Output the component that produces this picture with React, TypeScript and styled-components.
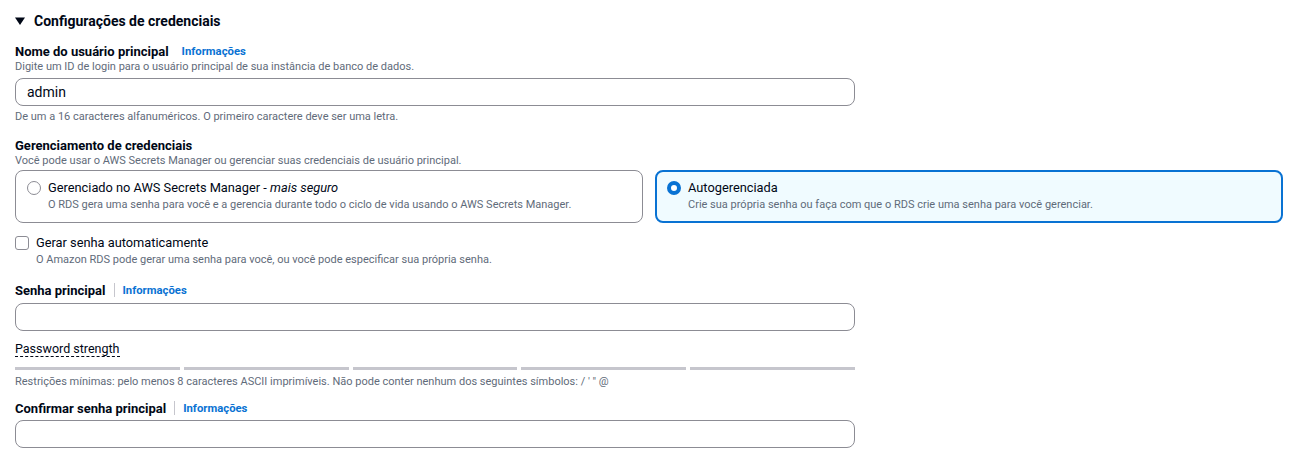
import React from "react";
import styled, { createGlobalStyle } from "styled-components";

const Global = createGlobalStyle`
  html, body { margin: 0; padding: 0; background: #ffffff; }
  body { font-family: Roboto, "Liberation Sans", Arial, sans-serif; color: #000716; }
  * { box-sizing: border-box; }
`;

const Page = styled.div`
  width: 1296px;
  height: 466px;
  overflow: hidden;
  padding: 12px 13px 0 15px;
  display: flex;
  flex-direction: column;
`;

const Header = styled.div`
  display: flex;
  align-items: center;
  gap: 9px;
  height: 18px;
  font-size: 14px;
  font-weight: 700;
`;

const Caret = styled.svg`
  width: 10px;
  height: 10px;
  fill: #000716;
`;

const Field = styled.div<{ $mt: number; $wide?: boolean }>`
  display: flex;
  flex-direction: column;
  margin-top: ${(p) => p.$mt}px;
  width: ${(p) => (p.$wide ? "1268px" : "840px")};
`;

const LabelRow = styled.div`
  display: flex;
  align-items: center;
  height: 16px;
`;

const Label = styled.span`
  font-size: 13px;
  font-weight: 700;
`;

const Divider = styled.span`
  width: 1px;
  height: 14px;
  background: #c6c6cd;
  margin: 0 8px;
`;

const Info = styled.a<{ $gap?: number }>`
  font-size: 11.3px;
  font-weight: 700;
  color: #0972d3;
  text-decoration: none;
  margin-left: ${(p) => p.$gap ?? 0}px;
`;

const Desc = styled.div<{ $mt?: number }>`
  font-size: 11px;
  color: #5f6b7a;
  line-height: 16px;
  margin-top: ${(p) => p.$mt ?? 0}px;
`;

const Input = styled.div<{ $mt: number }>`
  height: 28px;
  border: 1px solid #8c8c94;
  border-radius: 8px;
  padding: 0 11px;
  display: flex;
  align-items: center;
  font-size: 14px;
  margin-top: ${(p) => p.$mt}px;
`;

const Tiles = styled.div`
  display: grid;
  grid-template-columns: 1fr 1fr;
  gap: 12px;
  margin-top: 1px;
`;

const Tile = styled.div<{ $active?: boolean }>`
  height: 53px;
  border-radius: 8px;
  border: ${(p) => (p.$active ? "2px solid #0972d3" : "1px solid #8c8c94")};
  background: ${(p) => (p.$active ? "#f0fbff" : "#ffffff")};
  padding: ${(p) => (p.$active ? "7px 10px" : "8px 11px")};
  display: flex;
  gap: 7px;
`;

const Radio = styled.span<{ $checked?: boolean }>`
  flex: none;
  width: 14px;
  height: 14px;
  margin-top: 2px;
  border-radius: 50%;
  border: ${(p) => (p.$checked ? "4px solid #0972d3" : "1px solid #8c8c94")};
  background: #fff;
`;

const TileText = styled.div`
  display: flex;
  flex-direction: column;
`;

const TileTitle = styled.div`
  font-size: 12.8px;
  line-height: 18px;
  em { font-style: italic; }
`;

const TileDesc = styled.div`
  font-size: 11px;
  color: #5f6b7a;
  line-height: 15px;
`;

const CheckRow = styled.div`
  display: flex;
  gap: 7px;
  margin-top: 11px;
`;

const Checkbox = styled.span`
  flex: none;
  width: 14px;
  height: 14px;
  margin-top: 2px;
  border: 1px solid #8c8c94;
  border-radius: 3px;
`;

const CheckText = styled.div`
  display: flex;
  flex-direction: column;
`;

const Strength = styled.span`
  font-size: 12.5px;
  align-self: flex-start;
  border-bottom: 1px dashed #000716;
  line-height: 15px;
  margin-top: 10px;
`;

const Bars = styled.div`
  display: grid;
  grid-template-columns: repeat(5, 1fr);
  gap: 4px;
  margin-top: 10px;
`;

const Bar = styled.div`
  height: 3px;
  background: #c6c6cd;
`;

const SmallDesc = styled.div`
  font-size: 11px;
  color: #5f6b7a;
  line-height: 15px;
  margin-top: 4px;
`;

export default function App() {
  return (
    <Page>
      <Global />
      <Header>
        <Caret viewBox="0 0 10 10">
          <polygon points="0,1.5 10,1.5 5,9" />
        </Caret>
        Configurações de credenciais
      </Header>

      <Field $mt={13}>
        <LabelRow>
          <Label>Nome do usuário principal</Label>
          <Info $gap={13}>Informações</Info>
        </LabelRow>
        <Desc>Digite um ID de login para o usuário principal de sua instância de banco de dados.</Desc>
        <Input $mt={3}>admin</Input>
        <Desc $mt={3}>De um a 16 caracteres alfanuméricos. O primeiro caractere deve ser uma letra.</Desc>
      </Field>

      <Field $mt={12} $wide>
        <LabelRow>
          <Label>Gerenciamento de credenciais</Label>
        </LabelRow>
        <Desc>Você pode usar o AWS Secrets Manager ou gerenciar suas credenciais de usuário principal.</Desc>
        <Tiles>
          <Tile>
            <Radio />
            <TileText>
              <TileTitle>
                Gerenciado no AWS Secrets Manager - <em>mais seguro</em>
              </TileTitle>
              <TileDesc>
                O RDS gera uma senha para você e a gerencia durante todo o ciclo de vida usando o AWS Secrets Manager.
              </TileDesc>
            </TileText>
          </Tile>
          <Tile $active>
            <Radio $checked />
            <TileText>
              <TileTitle>Autogerenciada</TileTitle>
              <TileDesc>Crie sua própria senha ou faça com que o RDS crie uma senha para você gerenciar.</TileDesc>
            </TileText>
          </Tile>
        </Tiles>
      </Field>

      <CheckRow>
        <Checkbox />
        <CheckText>
          <TileTitle>Gerar senha automaticamente</TileTitle>
          <TileDesc>O Amazon RDS pode gerar uma senha para você, ou você pode especificar sua própria senha.</TileDesc>
        </CheckText>
      </CheckRow>

      <Field $mt={15}>
        <LabelRow>
          <Label>Senha principal</Label>
          <Divider />
          <Info>Informações</Info>
        </LabelRow>
        <Input $mt={5} />
        <Strength>Password strength</Strength>
        <Bars>
          <Bar />
          <Bar />
          <Bar />
          <Bar />
          <Bar />
        </Bars>
        <SmallDesc>
          Restrições mínimas: pelo menos 8 caracteres ASCII imprimíveis. Não pode conter nenhum dos seguintes símbolos: / ' " @
        </SmallDesc>
      </Field>

      <Field $mt={11}>
        <LabelRow>
          <Label>Confirmar senha principal</Label>
          <Divider />
          <Info>Informações</Info>
        </LabelRow>
        <Input $mt={4} />
      </Field>
    </Page>
  );
}
